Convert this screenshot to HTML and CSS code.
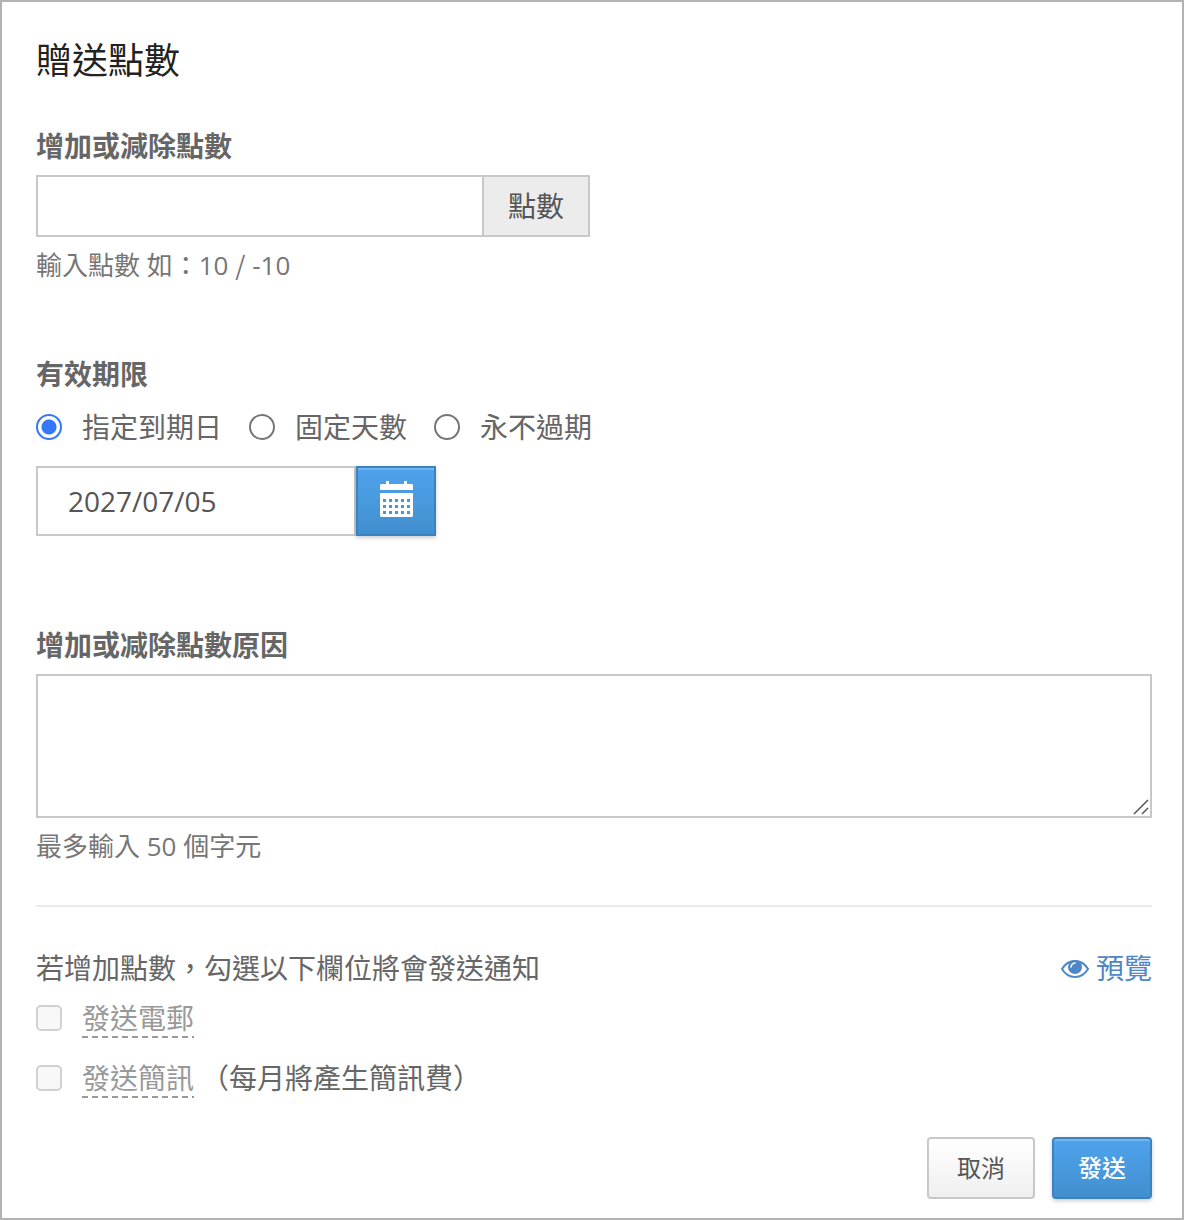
FILE: index.html
```html
<!DOCTYPE html>
<html lang="zh-Hant">
<head>
<meta charset="utf-8">
<meta name="viewport" content="width=device-width, initial-scale=1">
<title>贈送點數</title>
<link rel="stylesheet" href="styles.css">
</head>
<body>
<form class="dialog">
  <h1 class="title">贈送點數</h1>

  <section class="group">
    <label class="heading" for="points">增加或減除點數</label>
    <div class="addon-group">
      <input class="field" id="points" type="text">
      <span class="addon">點數</span>
    </div>
    <p class="help">輸入點數 如：10 <span class="slash">/</span> -10</p>
  </section>

  <section class="group expiry" role="radiogroup" aria-labelledby="expiry-heading">
    <h2 class="heading" id="expiry-heading">有效期限</h2>
    <div class="choices">
      <label class="choice"><input class="radio" type="radio" name="expiry" checked>指定到期日</label>
      <label class="choice"><input class="radio" type="radio" name="expiry">固定天數</label>
      <label class="choice"><input class="radio" type="radio" name="expiry">永不過期</label>
    </div>
    <div class="date-group">
      <input class="field date" type="text" value="2027/07/05" aria-label="到期日">
      <button class="btn-primary calendar" type="button" aria-label="選擇日期">
        <svg width="34" height="36" viewBox="0 0 34 36" aria-hidden="true">
          <path fill="#fff" d="M7 0h3v3h15V0h3v3h5l1 1v5H1V4l1-1h5zM1 12h33v23l-1 1H2l-1-1z"/>
          <path stroke="#4797dc" stroke-width="3" stroke-dasharray="3 3" d="M4 19.500h27M4 25.500h27M4 31.500h27"/>
        </svg>
      </button>
    </div>
  </section>

  <section class="group reason">
    <label class="heading" for="reason">增加或减除點數原因</label>
    <div class="textarea-wrap">
      <textarea class="textarea" id="reason" maxlength="50"></textarea>
      <svg class="grip" width="16" height="16" viewBox="0 0 16 16" aria-hidden="true">
        <path stroke="#555" stroke-width="1.500" fill="none" d="M1 15L15 1M9 15L15 9"/>
      </svg>
    </div>
    <p class="help">最多輸入 50 個字元</p>
  </section>

  <section class="notify">
    <div class="notify-head">
      <span>若增加點數，勾選以下欄位將會發送通知</span>
      <a class="preview" href="#">
        <svg width="28" height="20" viewBox="0 0 28 20" aria-hidden="true">
          <path fill="none" stroke="#4f86c6" stroke-width="2" d="M1 11C4 6 9 3 14 3s10 3 13 8c-3 5-8 8-13 8S4 16 1 11z"/>
          <circle cx="14" cy="9" r="7" fill="#4f86c6"/>
          <path fill="none" stroke="#fff" stroke-width="1.500" stroke-linecap="round" d="M10 9Q10.500 5.500 14 5"/>
        </svg>
        預覽
      </a>
    </div>
    <div class="check-row">
      <input class="checkbox" id="mail" type="checkbox" disabled>
      <label class="check-label" for="mail">發送電郵</label>
    </div>
    <div class="check-row">
      <input class="checkbox" id="sms" type="checkbox" disabled>
      <label class="check-label" for="sms">發送簡訊</label>
      <span class="note">（每月將產生簡訊費）</span>
    </div>
  </section>

  <footer class="actions">
    <button class="btn btn-default" type="button">取消</button>
    <button class="btn btn-primary" type="submit">發送</button>
  </footer>
</form>
</body>
</html>
```

FILE: styles.css
```css
* {
  box-sizing: border-box;
}

body {
  margin: 0;
  background: #fff;
  color: #666;
  font: 28px/40px "Open Sans", "Noto Sans CJK TC", sans-serif;
}

input,
textarea,
button {
  margin: 0;
  font-family: inherit;
  color: #555;
}

.dialog {
  padding: 39px 30px 19px 34px;
  border: 2px solid #b3b3b3;
}

.title {
  margin: 0 0 45px;
  color: #222;
  font-size: 36px;
  font-weight: 400;
  line-height: 40px;
}

.heading {
  display: block;
  margin: 0 0 9px;
  font-size: 28px;
  font-weight: 700;
  line-height: 40px;
}

.help {
  margin: 10px 0 0;
  color: #767676;
  font-size: 26px;
  line-height: 36px;
}

.slash {
  font-family: "Noto Sans CJK TC", sans-serif;
  line-height: 1;
}

.field {
  min-width: 0;
  border: 2px solid #c8c8c8;
  border-radius: 0;
  background: #fff;
  font-size: 28px;
}

.addon-group {
  display: flex;
  max-width: 554px;
  height: 62px;
}

.addon-group .field {
  flex: 1;
  padding: 0 24px;
  border-right: 0;
}

.addon {
  display: flex;
  align-items: center;
  padding: 0 24px;
  border: 2px solid #c8c8c8;
  background: #ececec;
  color: #555;
}

.expiry {
  margin-top: 71px;
}

.expiry .heading {
  margin-bottom: 13px;
}

.choices {
  display: flex;
  flex-wrap: wrap;
  gap: 27px;
}

.choice {
  display: flex;
  align-items: center;
  gap: 20px;
}

.radio {
  flex: none;
  appearance: none;
  width: 26px;
  height: 26px;
  border: 2px solid #767676;
  border-radius: 50%;
  background: #fff;
}

.radio:checked {
  border-color: #3478f6;
  background: radial-gradient(circle, #3478f6 7px, #fff 8px);
}

.date-group {
  display: flex;
  max-width: 400px;
  height: 70px;
  margin-top: 19px;
}

.date {
  flex: 1;
  padding: 0 30px;
}

.btn-primary {
  border: 2px solid #3b82c0;
  background: linear-gradient(#4fa3ec, #428fcf);
  box-shadow: inset 0 2px 0 rgba(255, 255, 255, 0.2), 0 2px 4px rgba(0, 0, 0, 0.2);
  color: #fff;
}

.calendar {
  display: flex;
  align-items: center;
  justify-content: center;
  width: 80px;
  padding: 0 0 4px;
}

.reason {
  margin-top: 89px;
}

.textarea-wrap {
  position: relative;
  display: flex;
}

.textarea {
  width: 100%;
  height: 144px;
  padding: 12px 24px;
  border: 2px solid #c8c8c8;
  border-radius: 0;
  font-size: 28px;
  resize: none;
}

.grip {
  position: absolute;
  right: 3px;
  bottom: 3px;
  pointer-events: none;
}

.notify {
  margin-top: 41px;
  padding-top: 41px;
  border-top: 2px solid #ebebeb;
}

.notify-head {
  display: flex;
  justify-content: space-between;
  margin-bottom: 12px;
}

.preview {
  display: flex;
  align-items: center;
  gap: 7px;
  color: #4f86c6;
  text-decoration: none;
}

.check-row {
  display: flex;
  align-items: flex-start;
  line-height: 36px;
}

.check-row + .check-row {
  margin-top: 22px;
}

.checkbox {
  flex: none;
  appearance: none;
  width: 26px;
  height: 26px;
  margin: 5px 20px 0 0;
  border: 2px solid #d1d1d1;
  border-radius: 5px;
  background: #f8f8f8;
}

.check-label {
  color: #999;
  background: repeating-linear-gradient(90deg, #999 0 6px, transparent 6px 10px) bottom / 100% 2px no-repeat;
  padding-bottom: 2px;
}

.note {
  margin-left: 7px;
}

.actions {
  display: flex;
  justify-content: flex-end;
  gap: 17px;
  margin-top: 39px;
}

.btn {
  height: 62px;
  padding: 0 24px;
  border-radius: 4px;
  font-size: 24px;
  line-height: 36px;
}

.btn-default {
  padding: 0 28px;
  border: 2px solid #c8c8c8;
  background: linear-gradient(#fff, #efefef);
}

.actions .btn-primary {
  font-weight: 500;
}
```
